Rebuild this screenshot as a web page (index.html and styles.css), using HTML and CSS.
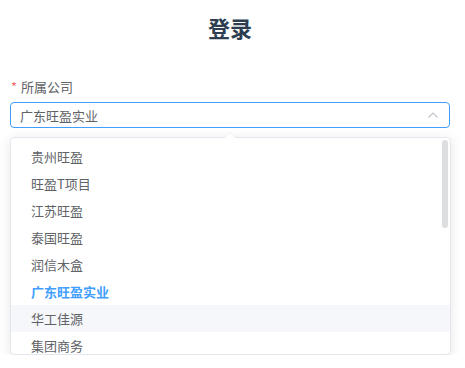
FILE: index.html
```html
<!DOCTYPE html>
<html lang="zh-CN">
<head>
    <meta charset="UTF-8">
    <meta name="viewport" content="width=device-width, initial-scale=1.0">
    <title>登录</title>
    <link rel="stylesheet" href="styles.css">
</head>
<body>
    <div class="container">
        <h1 class="title">登录</h1>
        <form class="login-form" action="#" method="post">
            <div class="form-item">
                <label class="form-label"><span class="required">*</span>所属公司</label>
                <div class="select">
                    <div class="select-input">
                        <span class="select-value">广东旺盈实业</span>
                        <svg class="select-arrow" width="12" height="8" viewBox="0 0 12 8">
                            <path d="M1.5 6.5 L6 2 L10.5 6.5" fill="none" stroke="#c0c4cc" stroke-width="1.2"/>
                        </svg>
                    </div>
                    <div class="company-menu">
                        <span class="menu-arrow"></span>
                        <ul class="menu-list">
                            <li class="menu-item">贵州旺盈</li>
                            <li class="menu-item">旺盈T项目</li>
                            <li class="menu-item">江苏旺盈</li>
                            <li class="menu-item">泰国旺盈</li>
                            <li class="menu-item">润信木盒</li>
                            <li class="menu-item selected">广东旺盈实业</li>
                            <li class="menu-item active">华工佳源</li>
                            <li class="menu-item">集团商务</li>
                        </ul>
                        <span class="menu-thumb"></span>
                    </div>
                </div>
            </div>
        </form>
    </div>
</body>
</html>
```

FILE: styles.css
```css
body {
    margin: 0;
    padding: 0;
    background-color: #ffffff;
    font-family: "Noto Sans CJK SC", "Noto Sans", sans-serif;
}

.container {
    width: 440px;
    padding: 12px 10px 0 10px;
}

.title {
    margin: 0;
    height: 30px;
    line-height: 30px;
    font-size: 22px;
    font-weight: bold;
    text-align: center;
    color: #2c3e50;
}

.login-form {
    margin-top: 36px;
}

.form-label {
    display: block;
    height: 18px;
    line-height: 18px;
    font-size: 13px;
    color: #606266;
    margin-bottom: 6px;
}

.required {
    color: #f56c6c;
    margin-right: 4px;
    margin-left: 1px;
}

.select-input {
    display: flex;
    align-items: center;
    justify-content: space-between;
    height: 24px;
    padding: 0 10px 0 9px;
    border: 1px solid #409eff;
    border-radius: 4px;
    font-size: 13px;
    color: #606266;
}

.company-menu {
    position: relative;
    margin-top: 9px;
    width: 439px;
    height: 216px;
    border: 1px solid #e4e7ed;
    border-radius: 4px;
    background-color: #ffffff;
    box-shadow: 0 2px 12px rgba(0, 0, 0, 0.1);
}

.menu-arrow {
    position: absolute;
    top: -6px;
    left: 213px;
    width: 0;
    height: 0;
    border-left: 6px solid transparent;
    border-right: 6px solid transparent;
    border-bottom: 6px solid #ebeef5;
}

.menu-arrow::after {
    content: "";
    position: absolute;
    top: 1px;
    left: -6px;
    border-left: 6px solid transparent;
    border-right: 6px solid transparent;
    border-bottom: 6px solid #ffffff;
}

.menu-list {
    list-style: none;
    margin: 0;
    padding: 5px 0 0;
    height: 211px;
    overflow: hidden;
    border-radius: 4px;
}

.menu-item {
    height: 27px;
    line-height: 27px;
    padding: 0 20px;
    font-size: 13px;
    color: #606266;
}

.menu-item.selected {
    color: #409eff;
    font-weight: bold;
}

.menu-item.active {
    background-color: #f5f7fa;
}

.menu-thumb {
    position: absolute;
    top: 2px;
    right: 2px;
    width: 6px;
    height: 88px;
    border-radius: 3px;
    background-color: #dddee0;
}
```
